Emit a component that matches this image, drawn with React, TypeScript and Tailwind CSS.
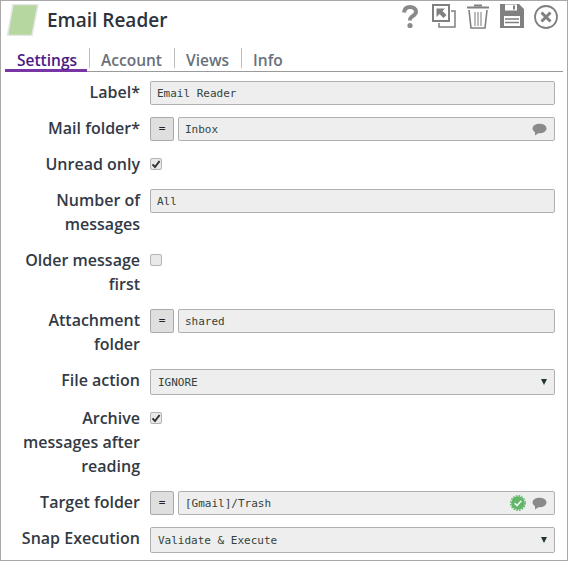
import React from 'react';

const sans = "font-['Open_Sans',sans-serif]";
const mono = "font-['DejaVu_Sans_Mono',monospace]";

function Row({ label, children }: { label: string; children: React.ReactNode }) {
  return (
    <div className="flex gap-[10px]">
      <div className="w-[132px] shrink-0 -translate-y-[1px] text-right text-[16px] leading-[24px] font-semibold text-[#333a45]">{label}</div>
      <div className="flex-1 min-w-0">{children}</div>
    </div>
  );
}

function Comment({ className = '' }: { className?: string }) {
  return (
    <svg width="15" height="13" viewBox="0 0 15 13" className={className}>
      <ellipse cx="7.5" cy="5.5" rx="7" ry="4.8" fill="#8a8a8a" />
      <path d="M3 8.5 L3 12.5 L7.5 9.5 Z" fill="#8a8a8a" />
    </svg>
  );
}

function Verified() {
  return (
    <svg width="16" height="16" viewBox="0 0 16 16">
      <circle cx="8" cy="8" r="6.8" fill="#62b56a" />
      <circle cx="8" cy="8" r="7.3" fill="none" stroke="#62b56a" strokeWidth="1.4" strokeDasharray="1.6 1.3" />
      <path d="M4.6 8.2 L7 10.6 L11.4 5.8" fill="none" stroke="#eef6ee" strokeWidth="1.6" />
    </svg>
  );
}

function TextBox({ value, children }: { value: string; children?: React.ReactNode }) {
  return (
    <div className={`flex-1 min-w-0 h-[24px] flex items-center pl-[6px] pr-[7px] bg-[#eeeeee] border border-[#b0b0b0] rounded-[2px] text-[11px] text-[#33433a] ${mono}`}>
      <span className="flex-1 whitespace-pre pt-[2px]">{value}</span>
      {children}
    </div>
  );
}

function ExprRow({ value, children }: { value: string; children?: React.ReactNode }) {
  return (
    <div className="flex gap-[4px]">
      <div className={`w-[24px] h-[24px] flex items-center justify-center bg-[#dfdfdf] border border-[#aaaaaa] rounded-[2px] text-[11px] text-[#222222] ${mono}`}>=</div>
      <TextBox value={value}>{children}</TextBox>
    </div>
  );
}

function Select({ value }: { value: string }) {
  return (
    <div className={`h-[26px] flex items-center pl-[7px] pr-[7px] bg-[#eeeeee] border border-[#b0b0b0] rounded-[2px] text-[11px] text-[#33433a] ${mono}`}>
      <span className="flex-1 whitespace-pre pt-[2px]">{value}</span>
      <svg width="6" height="6" viewBox="0 0 6 6"><path d="M0 0 H6 L3 6 Z" fill="#1f3a28" /></svg>
    </div>
  );
}

function Check({ checked }: { checked?: boolean }) {
  return (
    <div className="h-[22px] flex items-center">
      <div className="w-[12px] h-[12px] flex items-center justify-center bg-[#e9e9e9] border border-[#b5b5b5] rounded-[2px]">
        {checked && (
          <svg width="10" height="10" viewBox="0 0 10 10">
            <path d="M1.5 5.4 L4 8 L8.6 2" fill="none" stroke="#333333" strokeWidth="2" />
          </svg>
        )}
      </div>
    </div>
  );
}

function Tab({ label, active }: { label: string; active?: boolean }) {
  if (active) {
    return (
      <div className="h-[25px] -mb-[1px] pl-[12px] pr-[10px] mr-[2px] pt-[6px] flex items-center border-b-[3px] border-[#7a35a5] text-[15.5px] font-semibold text-[#4a1a85]">
        {label}
      </div>
    );
  }
  return (
    <div className="h-[20px] mb-[3px] pl-[11px] pr-[12px] pt-[6px] flex items-center border-l border-[#bdbdbd] text-[15.5px] font-semibold text-[#69707c]">
      {label}
    </div>
  );
}

function HeaderIcons() {
  return (
    <div className="flex items-start gap-[10px] pt-[3px]">
      <svg width="24" height="26" viewBox="0 0 24 26">
        <path d="M6 8.5 C6.5 4.5 9 3 12 3 C15.5 3 18 5 18 7.5 C18 10.5 15.5 11.5 13.5 13 C12.5 13.8 12 14.5 12 16.5" fill="none" stroke="#8a8a8a" strokeWidth="4" />
        <circle cx="12" cy="21.5" r="2.6" fill="#8a8a8a" />
      </svg>
      <svg width="24" height="24" viewBox="0 0 24 24">
        <rect x="1" y="1" width="16" height="16" fill="none" stroke="#808080" strokeWidth="2" />
        <path d="M19 7 H23 V23 H7 V19" fill="none" stroke="#808080" strokeWidth="1.5" />
        <path d="M4.5 4.5 H13 L10.5 7 L14.5 11 L11.5 14 L7.5 10 L4.5 13 Z" fill="#808080" />
      </svg>
      <svg width="24" height="25" viewBox="0 0 24 25">
        <rect x="1" y="2.5" width="22" height="2" fill="#808080" />
        <rect x="8" y="0.5" width="8" height="2" fill="#808080" />
        <path d="M3 6 L5 24 H19 L21 6" fill="none" stroke="#808080" strokeWidth="1.6" />
        <path d="M9 8 V22 M12 8 V22 M15 8 V22" stroke="#909090" strokeWidth="1.2" />
      </svg>
      <svg width="24" height="24" viewBox="0 0 24 24">
        <path d="M0 0 H19 L24 5 V24 H0 Z" fill="#808080" />
        <rect x="5" y="0.5" width="12" height="6" fill="#ffffff" />
        <rect x="13" y="1.5" width="2" height="4" fill="#808080" />
        <rect x="4" y="12" width="16" height="10" fill="#ffffff" />
        <path d="M5 15 H19 M5 18.5 H19" stroke="#808080" strokeWidth="1.5" />
      </svg>
      <svg width="24" height="24" viewBox="0 0 24 24" className="mt-[1px]">
        <circle cx="12" cy="12" r="11" fill="none" stroke="#808080" strokeWidth="1.8" />
        <path d="M7.5 7.5 L16.5 16.5 M16.5 7.5 L7.5 16.5" stroke="#808080" strokeWidth="3" />
      </svg>
    </div>
  );
}

export default function App() {
  return (
    <div className={`w-[568px] h-[561px] bg-white border border-[#a8a8a8] overflow-hidden ${sans}`}>
      {/* header */}
      <div className="flex items-start justify-between h-[45px] pr-[9px]">
        <div className="flex items-center pl-[6px] pt-[3px] gap-[8px]">
          <svg width="32" height="32" viewBox="0 0 32 32">
            <path d="M6 0.5 H31 L25 31.5 H0.5 Z" fill="#b6d7a0" stroke="#e6e6e6" strokeWidth="1.5" />
          </svg>
          <span className="text-[19px] font-semibold text-[#2e333b]">Email Reader</span>
        </div>
        <HeaderIcons />
      </div>

      {/* tabs */}
      <div className="flex items-end ml-[4px] mr-[4px] h-[26px] border-b border-[#9a9a9a]">
        <Tab label="Settings" active />
        <Tab label="Account" />
        <Tab label="Views" />
        <Tab label="Info" />
      </div>

      {/* form */}
      <div className="flex flex-col gap-[12px] pt-[9px] pl-[7px] pr-[12px]">
        <Row label="Label*"><div className="flex"><TextBox value="Email Reader" /></div></Row>
        <Row label="Mail folder*">
          <ExprRow value="Inbox"><Comment /></ExprRow>
        </Row>
        <Row label="Unread only"><Check checked /></Row>
        <Row label="Number of messages"><div className="flex"><TextBox value="All" /></div></Row>
        <Row label="Older message first"><Check /></Row>
        <Row label="Attachment folder"><ExprRow value="shared" /></Row>
        <Row label="File action"><Select value="IGNORE" /></Row>
        <Row label="Archive messages after reading"><Check checked /></Row>
        <Row label="Target folder">
          <ExprRow value="[Gmail]/Trash">
            <span className="flex items-center gap-[6px]"><Verified /><Comment /></span>
          </ExprRow>
        </Row>
        <Row label="Snap Execution"><Select value="Validate & Execute" /></Row>
      </div>
    </div>
  );
}
